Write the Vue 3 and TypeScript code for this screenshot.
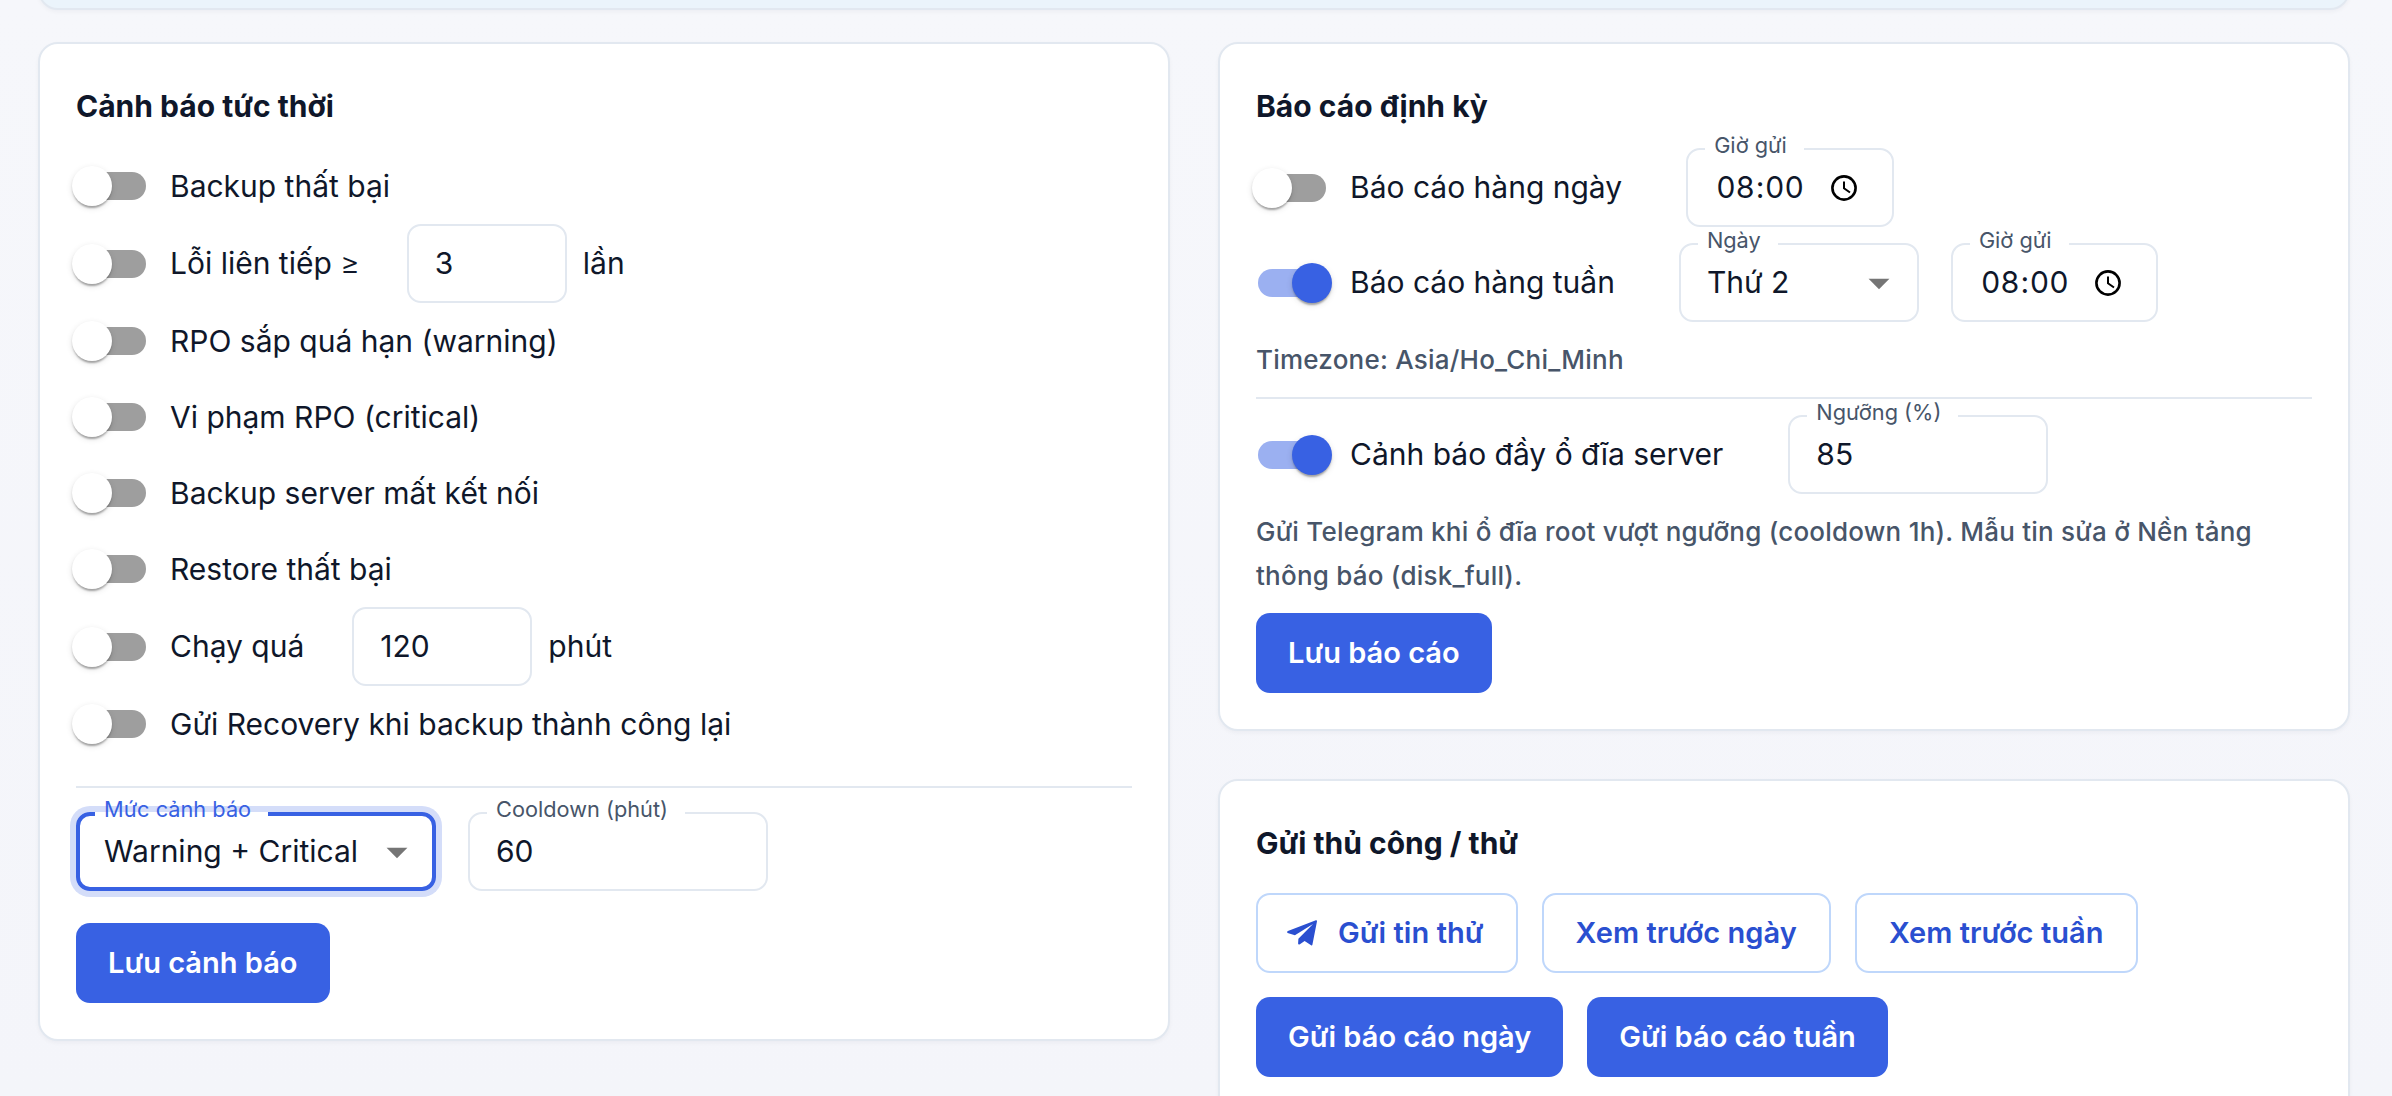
<script setup lang="ts">
interface AlertRow {
  label: string
  sign?: string
  value?: string
  unit?: string
  width?: number
}

const alerts: AlertRow[] = [
  { label: 'Backup thất bại' },
  { label: 'Lỗi liên tiếp ', sign: '≥', value: '3', unit: 'lần', width: 160 },
  { label: 'RPO sắp quá hạn (warning)' },
  { label: 'Vi phạm RPO (critical)' },
  { label: 'Backup server mất kết nối' },
  { label: 'Restore thất bại' },
  { label: 'Chạy quá', value: '120', unit: 'phút', width: 180 },
  { label: 'Gửi Recovery khi backup thành công lại' },
]
</script>

<template>
  <div class="page">
    <div class="banner"></div>
    <div class="columns">
      <section class="card">
        <h2 class="title">Cảnh báo tức thời</h2>
        <div class="alerts">
          <div v-for="row in alerts" :key="row.label" class="row tight">
            <label class="control">
              <span class="switch"><span class="track"></span><span class="thumb"></span></span>
              <span class="text">{{ row.label }}<span v-if="row.sign" class="sign">{{ row.sign }}</span></span>
            </label>
            <template v-if="row.value">
              <div class="field" :style="{ width: row.width + 'px' }"><span class="value">{{ row.value }}</span></div>
              <span class="text">{{ row.unit }}</span>
            </template>
          </div>
        </div>
        <hr class="divider wide" />
        <div class="row">
          <div class="field focused level">
            <span class="legend">Mức cảnh báo</span>
            <span class="value">Warning + Critical</span>
            <svg class="arrow" viewBox="0 0 24 24"><path d="M7 10l5 5 5-5z" /></svg>
          </div>
          <div class="field cooldown">
            <span class="legend">Cooldown (phút)</span>
            <span class="value">60</span>
          </div>
        </div>
        <button class="btn save">Lưu cảnh báo</button>
      </section>

      <div class="side">
        <section class="card">
          <h2 class="title">Báo cáo định kỳ</h2>
          <div class="stack">
            <div class="row">
              <label class="control">
                <span class="switch"><span class="track"></span><span class="thumb"></span></span>
                <span class="text">Báo cáo hàng ngày</span>
              </label>
              <div class="field time">
                <span class="legend">Giờ gửi</span>
                <span class="value">08<span class="colon">:</span>00</span>
                <svg class="clock" viewBox="0 0 26 26"><circle cx="13" cy="13" r="11.6" /><path d="M13 6.500V13.300L19 17.500" /></svg>
              </div>
            </div>
            <div class="row">
              <label class="control">
                <span class="switch on"><span class="track"></span><span class="thumb"></span></span>
                <span class="text">Báo cáo hàng tuần</span>
              </label>
              <div class="field day">
                <span class="legend">Ngày</span>
                <span class="value">Thứ 2</span>
                <svg class="arrow" viewBox="0 0 24 24"><path d="M7 10l5 5 5-5z" /></svg>
              </div>
              <div class="field time">
                <span class="legend">Giờ gửi</span>
                <span class="value">08<span class="colon">:</span>00</span>
                <svg class="clock" viewBox="0 0 26 26"><circle cx="13" cy="13" r="11.6" /><path d="M13 6.500V13.300L19 17.500" /></svg>
              </div>
            </div>
            <p class="caption">Timezone: Asia/Ho_Chi_Minh</p>
            <hr class="divider" />
            <div class="row">
              <label class="control disk">
                <span class="switch on"><span class="track"></span><span class="thumb"></span></span>
                <span class="text">Cảnh báo đầy ổ đĩa server</span>
              </label>
              <div class="field threshold">
                <span class="legend">Ngưỡng (%)</span>
                <span class="value">85</span>
              </div>
            </div>
            <p class="caption">Gửi Telegram khi ổ đĩa root vượt ngưỡng (cooldown 1h). Mẫu tin sửa ở Nền tảng thông báo (disk_full).</p>
            <button class="btn">Lưu báo cáo</button>
          </div>
        </section>

        <section class="card">
          <h2 class="title">Gửi thủ công / thử</h2>
          <div class="actions">
            <button class="btn outlined">
              <svg class="plane" viewBox="0 0 30 26"><path d="M.6 12.900Q-.5 11.700.9 11L28.900.3Q30.200 0 30 1.300L25.400 24.700Q25.100 25.800 24.100 25.200L17.600 20.900L12.900 24.200Q11.200 24.900 11.100 23.500L11.400 18.700L26 4L7.900 15.300Z" /></svg>
              Gửi tin thử
            </button>
            <button class="btn outlined">Xem trước ngày</button>
            <button class="btn outlined">Xem trước tuần</button>
          </div>
          <div class="actions">
            <button class="btn">Gửi báo cáo ngày</button>
            <button class="btn">Gửi báo cáo tuần</button>
          </div>
        </section>
      </div>
    </div>
  </div>
</template>

<style>
html,
body {
  overflow: hidden;
}
</style>

<style scoped>
.page {
  box-sizing: border-box;
  height: 1096px;
  overflow: hidden;
  padding: 0 42px 0 38px;
  background: linear-gradient(#f6f7fb, #f4f5fa);
  color: #0f172a;
  font-family: Inter, 'Noto Sans', sans-serif;
  font-size: 30px;
}
.page * {
  box-sizing: border-box;
}
.banner {
  height: 60px;
  margin-top: -50px;
  border: 2px solid #e2e8f0;
  border-radius: 20px;
  background: #ebf4fb;
  box-shadow: 0 2px 4px rgba(15, 23, 42, 0.04);
}
.columns {
  display: flex;
  align-items: flex-start;
  gap: 48px;
  margin-top: 32px;
}
.columns > * {
  width: 1132px;
  flex: none;
}
.side {
  display: flex;
  flex-direction: column;
  gap: 48px;
}
.card {
  padding: 36px;
  border: 2px solid #e2e8f0;
  border-radius: 20px;
  background: #fff;
  box-shadow: 0 2px 4px rgba(15, 23, 42, 0.04);
}
.title {
  margin: 0 0 16px;
  font-size: 30px;
  font-weight: 700;
  line-height: 52px;
}
.row {
  display: flex;
  align-items: center;
  gap: 32px;
}
.tight {
  gap: 16px;
}
.control {
  display: flex;
  align-items: center;
  margin-left: -22px;
  margin-right: 32px;
}
.disk {
  margin-right: 33px;
}
.text {
  line-height: 45px;
  white-space: nowrap;
}
.sign {
  margin-right: -1px;
  font-weight: 300;
}
.switch {
  display: flex;
  align-items: center;
  width: 116px;
  height: 76px;
  padding: 24px;
}
.track {
  flex: none;
  width: 68px;
  height: 28px;
  border-radius: 14px;
  background: #9e9e9e;
}
.thumb {
  flex: none;
  width: 40px;
  height: 40px;
  margin-left: -74px;
  border-radius: 50%;
  background: #fff;
  box-shadow: 0 4px 2px -2px rgba(0, 0, 0, 0.2), 0 2px 2px rgba(0, 0, 0, 0.14), 0 2px 6px rgba(0, 0, 0, 0.12);
}
.on .track {
  background: #9bb0f1;
}
.on .thumb {
  margin-left: -34px;
  background: #3861e3;
}
.field {
  position: relative;
  display: flex;
  align-items: center;
  height: 79px;
  padding: 0 28px;
  border: 2px solid #e2e8f0;
  border-radius: 14px;
}
.level {
  width: 360px;
}
.cooldown {
  width: 300px;
}
.day {
  width: 240px;
}
.threshold {
  width: 260px;
}
.field .value {
  margin-left: -2px;
  padding-bottom: 1px;
  flex: 1;
  white-space: nowrap;
}
.legend {
  position: absolute;
  isolation: isolate;
  top: -22px;
  left: 16px;
  padding: 0 17px 0 10px;
  color: #475569;
  font-size: 21.75px;
  line-height: 34px;
  white-space: nowrap;
}
.legend::before {
  content: '';
  position: absolute;
  z-index: -1;
  top: 20px;
  left: 1px;
  right: 0;
  height: 2px;
  background: #fff;
}
.focused {
  border: 4px solid #3861e3;
  box-shadow: 0 0 0 6px #d4ddf9;
}
.focused .value {
  margin-left: -4px;
}
.focused .legend {
  top: -24px;
  left: 14px;
  color: #3861e3;
}
.focused .legend::before {
  height: 4px;
}
.arrow {
  position: absolute;
  right: 13px;
  width: 50px;
  height: 50px;
  fill: #757575;
}
.focused .arrow {
  right: 10px;
}
.time {
  width: 207.5px;
}
.field.time .value {
  margin-left: 0;
  font-feature-settings: 'tnum';
}
.colon {
  margin: 0 1px;
}
.clock {
  position: absolute;
  left: 142.5px;
  width: 26px;
  height: 26px;
  fill: none;
  stroke: #000;
  stroke-width: 2.6;
}
.clock path {
  stroke-width: 2;
}
.divider {
  width: 100%;
  height: 2px;
  margin: 0;
  border: 0;
  background: #e2e8f0;
}
.wide {
  margin: 24px 0;
}
.stack {
  display: flex;
  flex-direction: column;
  align-items: flex-start;
  gap: 16px;
}
.caption {
  margin: 0;
  color: #475569;
  font-size: 26px;
  font-weight: 500;
  letter-spacing: 0.22px;
  line-height: 43.3px;
}
.btn {
  display: flex;
  align-items: center;
  height: 80px;
  padding: 0 32px 1px;
  border: 0;
  border-radius: 14px;
  background: #3861e3;
  color: #fff;
  font: inherit;
  font-size: 29px;
  font-weight: 600;
  white-space: nowrap;
}
.save {
  margin-top: 32px;
}
.outlined {
  padding-bottom: 0;
  border: 2px solid #bfd7fb;
  background: #fff;
  color: #2a4fd0;
  letter-spacing: 0.05px;
}
.actions {
  display: flex;
  gap: 24px;
  margin-top: 24px;
}
.plane {
  width: 30px;
  height: 26px;
  margin-left: -3px;
  margin-right: 21px;
  fill: #2a4fd0;
}
</style>
